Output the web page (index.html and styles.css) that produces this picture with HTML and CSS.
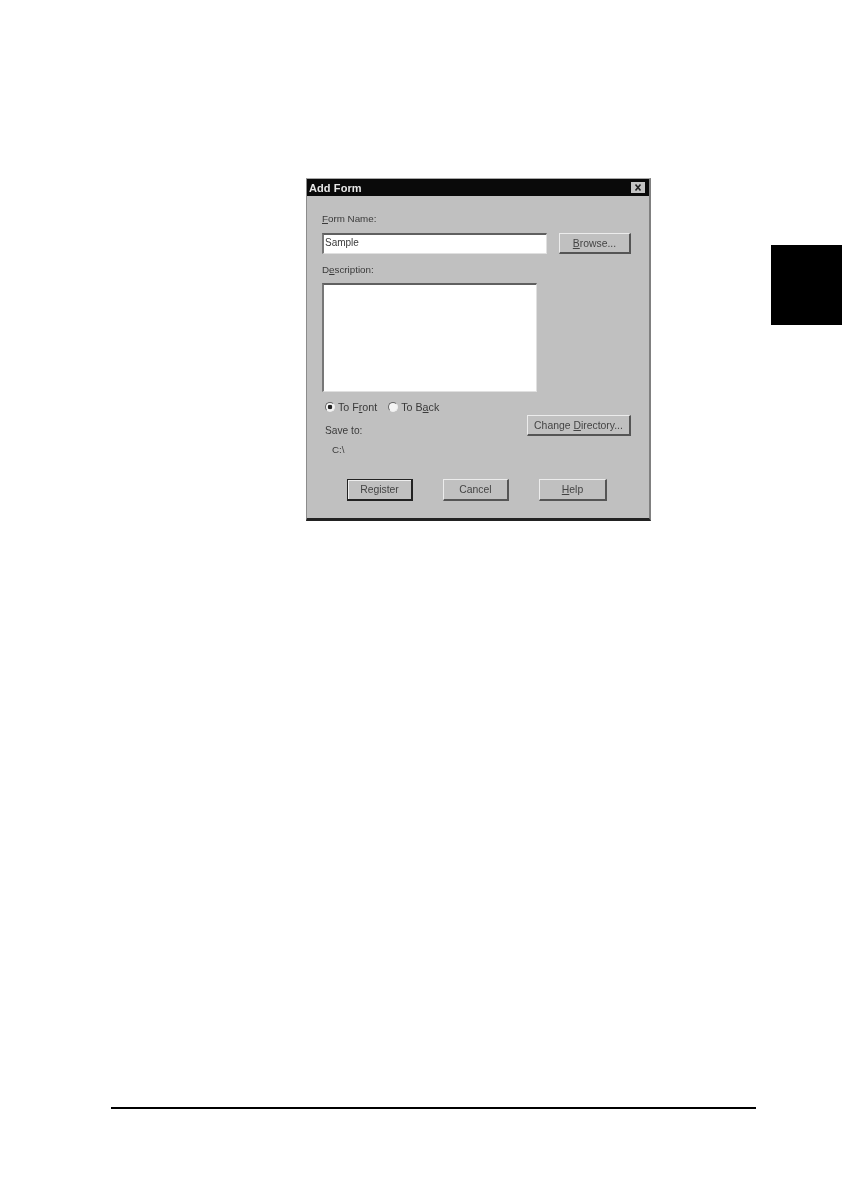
FILE: index.html
```html
<!DOCTYPE html>
<html lang="en">
<head>
<meta charset="utf-8">
<title>Add Form</title>
<link rel="stylesheet" href="styles.css">
</head>
<body>
<div class="page">
  <div class="top">
    <div class="dialog">
      <div class="titlebar">
        <span class="title">Add Form</span>
        <span class="close"><svg viewBox="0 0 14 11" width="14" height="11"><path d="M4.5 2.5l5 6M9.5 2.5l-5 6" stroke="#222" stroke-width="1.6" fill="none"/></svg></span>
      </div>
      <div class="body">
        <div class="label first"><u>F</u>orm Name:</div>
        <div class="row-name">
          <div class="field name">Sample</div>
          <div class="btn browse"><span><u>B</u>rowse...</span></div>
        </div>
        <div class="label desc">D<u>e</u>scription:</div>
        <div class="field area"></div>
        <div class="row-lower">
          <div class="lower-left">
            <div class="radios">
              <span class="radio"><span class="dot on"></span><span>To F<u>r</u>ont</span></span>
              <span class="radio"><span class="dot"></span><span>To B<u>a</u>ck</span></span>
            </div>
            <div class="label save">Save to:</div>
            <div class="label path">C:\</div>
          </div>
          <div class="btn change"><span>Change <u>D</u>irectory...</span></div>
        </div>
        <div class="actions">
          <div class="btn action default"><span>Register</span></div>
          <div class="btn action"><span>Cancel</span></div>
          <div class="btn action help"><span><u>H</u>elp</span></div>
        </div>
      </div>
    </div>
    <div class="tab"></div>
  </div>
  <div class="rule"></div>
</div>
</body>
</html>
```
FILE: styles.css
```css
* { box-sizing: border-box; }
html, body { margin: 0; padding: 0; background: #fff; }
.page { width: 842px; height: 1190px; padding-top: 178px; overflow: hidden; }
.top { display: flex; align-items: flex-start; height: 929px; }
.dialog {
  width: 345px; height: 343px; margin-left: 306px;
  background: #c0c0c0;
  border-top: 1px solid #a8a8a8;
  border-left: 1px solid #8c8c8c;
  border-right: 2px solid #808080;
  border-bottom: 3px solid #222;
  font-family: "Liberation Sans", Arial, sans-serif;
  font-size: 9.8px; color: #3a3a3a;
  filter: blur(0.7px);
}
.titlebar {
  height: 17px; background: #0a0a0a; color: #e8e8e8;
  display: flex; align-items: center; justify-content: space-between;
  padding: 0 4px 0 2px;
}
.title { font-weight: 700; font-size: 11px; letter-spacing: 0.1px; }
.close { width: 14px; height: 11px; background: #c4c4c4; display: flex; }
.body { padding: 0 18px 0 15px; }
.label { line-height: 12px; white-space: nowrap; }
.first { margin-top: 17px; }
.row-name { display: flex; justify-content: space-between; margin-top: 8px; }
.field {
  background: #fff;
  border-top: 2px solid #606060;
  border-left: 2px solid #777;
  border-right: 1px solid #e0e0e0;
  border-bottom: 1px solid #e0e0e0;
}
.name { width: 225px; height: 21px; padding-left: 1px; line-height: 15px; font-size: 10px; }
.btn {
  background: #c0c0c0;
  border-top: 1px solid #ececec;
  border-left: 1px solid #ececec;
  border-right: 2px solid #555;
  border-bottom: 2px solid #555;
  display: flex; align-items: center; justify-content: center;
  white-space: nowrap; color: #444; font-size: 10.4px;
}
.browse { width: 72px; height: 21px; }
.desc { margin-top: 10px; }
.area { width: 215px; height: 109px; margin-top: 7px; }
.row-lower { display: flex; justify-content: space-between; align-items: flex-start; margin-top: 9px; }
.lower-left { display: flex; flex-direction: column; }
.radios { display: flex; gap: 11px; padding-left: 3px; line-height: 12px; font-size: 10.7px; }
.radio { display: flex; align-items: center; gap: 3px; }
.dot {
  width: 10px; height: 10px; border-radius: 50%; background: #f4f4f4;
  border: 1px solid #666; border-right-color: #eee; border-bottom-color: #eee;
  display: block;
}
.dot.on { background: radial-gradient(circle, #222 0 2px, #f4f4f4 2.6px); }
.save { margin-top: 12px; padding-left: 3px; font-size: 10.2px; }
.path { margin-top: 7px; padding-left: 10px; }
.change { width: 104px; height: 21px; margin-top: 14px; }
.actions { display: flex; gap: 30px; padding-left: 25px; margin-top: 23px; }
.action { width: 66px; height: 22px; }
.help { width: 68px; }
.default { border: 1px solid #222; border-right-width: 2px; border-bottom-width: 2px; box-shadow: inset 1px 1px 0 #eee; }
.tab { width: 71px; height: 80px; margin-left: 120px; margin-top: 67px; background: #000; }
.rule { width: 645px; height: 2px; margin-left: 111px; background: #000; }
```
